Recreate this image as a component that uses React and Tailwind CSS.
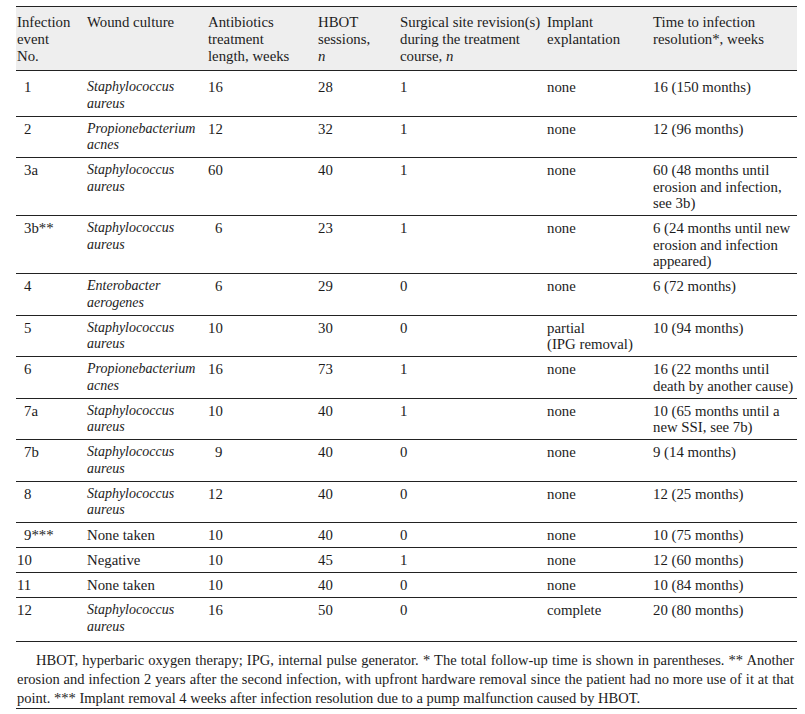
const rows = [
  { no: '1', pad: true, culture: ['Staphylococcus', 'aureus'], ab: '16', hbot: '28', rev: '1', impl: ['none'], time: ['16 (150 months)'], first: true },
  { no: '2', pad: true, culture: ['Propionebacterium', 'acnes'], ab: '12', hbot: '32', rev: '1', impl: ['none'], time: ['12 (96 months)'] },
  { no: '3a', pad: true, culture: ['Staphylococcus', 'aureus'], ab: '60', hbot: '40', rev: '1', impl: ['none'], time: ['60 (48 months until', 'erosion and infection,', 'see 3b)'] },
  { no: '3b**', pad: true, culture: ['Staphylococcus', 'aureus'], ab: '6', abPad: true, hbot: '23', rev: '1', impl: ['none'], time: ['6 (24 months until new', 'erosion and infection', 'appeared)'] },
  { no: '4', pad: true, culture: ['Enterobacter', 'aerogenes'], ab: '6', abPad: true, hbot: '29', rev: '0', impl: ['none'], time: ['6 (72 months)'] },
  { no: '5', pad: true, culture: ['Staphylococcus', 'aureus'], ab: '10', hbot: '30', rev: '0', impl: ['partial', '(IPG removal)'], time: ['10 (94 months)'] },
  { no: '6', pad: true, culture: ['Propionebacterium', 'acnes'], ab: '16', hbot: '73', rev: '1', impl: ['none'], time: ['16 (22 months until', 'death by another cause)'] },
  { no: '7a', pad: true, culture: ['Staphylococcus', 'aureus'], ab: '10', hbot: '40', rev: '1', impl: ['none'], time: ['10 (65 months until a', 'new SSI, see 7b)'] },
  { no: '7b', pad: true, culture: ['Staphylococcus', 'aureus'], ab: '9', abPad: true, hbot: '40', rev: '0', impl: ['none'], time: ['9 (14 months)'] },
  { no: '8', pad: true, culture: ['Staphylococcus', 'aureus'], ab: '12', hbot: '40', rev: '0', impl: ['none'], time: ['12 (25 months)'] },
  { no: '9***', pad: true, culture: ['None taken'], plain: true, ab: '10', hbot: '40', rev: '0', impl: ['none'], time: ['10 (75 months)'] },
  { no: '10', culture: ['Negative'], plain: true, ab: '10', hbot: '45', rev: '1', impl: ['none'], time: ['12 (60 months)'] },
  { no: '11', culture: ['None taken'], plain: true, ab: '10', hbot: '40', rev: '0', impl: ['none'], time: ['10 (84 months)'] },
  { no: '12', culture: ['Staphylococcus', 'aureus'], ab: '16', hbot: '50', rev: '0', impl: ['complete'], time: ['20 (80 months)'], last: true },
];

function Lines({ items }) {
  return items.map((t, i) => <div key={i}>{t}</div>);
}

export default function App() {
  return (
    <div className="bg-white w-[805px] h-[714px] pt-[6px] pl-4 text-[#1c1c1c]" style={{ fontFamily: '"Liberation Serif", "Times New Roman", serif' }}>
      <div className="w-[781px]">
        <table className="w-full table-fixed border-collapse text-[14.8px] leading-[16.5px]">
          <colgroup>
            <col className="w-[71px]" />
            <col className="w-[121px]" />
            <col className="w-[110px]" />
            <col className="w-[82px]" />
            <col className="w-[147px]" />
            <col className="w-[106px]" />
            <col className="w-[144px]" />
          </colgroup>
          <thead>
            <tr className="bg-[#eeeeee] border-t border-b border-[#222] align-top text-left leading-[17px]">
              <th className="font-normal pl-px pt-[7px] pb-[5px]"><Lines items={['Infection', 'event', 'No.']} /></th>
              <th className="font-normal pt-[7px]">Wound culture</th>
              <th className="font-normal pt-[7px]"><Lines items={['Antibiotics', 'treatment', 'length, weeks']} /></th>
              <th className="font-normal pt-[7px]"><Lines items={['HBOT', 'sessions,', <i key="n">n</i>]} /></th>
              <th className="font-normal pt-[7px]"><Lines items={['Surgical site revision(s)', 'during the treatment', <span key="c">course, <i>n</i></span>]} /></th>
              <th className="font-normal pt-[7px]"><Lines items={['Implant', 'explantation']} /></th>
              <th className="font-normal pt-[7px]"><Lines items={['Time to infection', 'resolution*, weeks']} /></th>
            </tr>
          </thead>
          <tbody>
            {rows.map(r => {
              const pt = r.first ? 'pt-[8px]' : 'pt-[4px]';
              const pb = r.last ? 'pb-[6px]' : 'pb-[3.5px]';
              const cell = `${pt} ${pb}`;
              return (
                <tr key={r.no} className="border-b border-[#222] align-top">
                  <td className={`${cell} ${r.pad ? 'pl-[8px]' : 'pl-px'}`}>{r.no}</td>
                  <td className={`${cell} ${r.plain ? '' : 'italic text-[14px]'}`}><Lines items={r.culture} /></td>
                  <td className={`${cell} ${r.abPad ? 'pl-[7px]' : ''}`}>{r.ab}</td>
                  <td className={cell}>{r.hbot}</td>
                  <td className={cell}>{r.rev}</td>
                  <td className={cell}><Lines items={r.impl} /></td>
                  <td className={cell}><Lines items={r.time} /></td>
                </tr>
              );
            })}
          </tbody>
        </table>
        <div className="border-b border-[#222] pt-[9px] pb-0 pl-px pr-[3px] text-[14.5px] leading-[19px] text-justify indent-[19px]">
          HBOT, hyperbaric oxygen therapy; IPG, internal pulse generator. * The total follow-up time is shown in parentheses. ** Another erosion and infection 2 years after the second infection, with upfront hardware removal since the patient had no more use of it at that point. *** Implant removal 4 weeks after infection resolution due to a pump malfunction caused by HBOT.
        </div>
      </div>
    </div>
  );
}
